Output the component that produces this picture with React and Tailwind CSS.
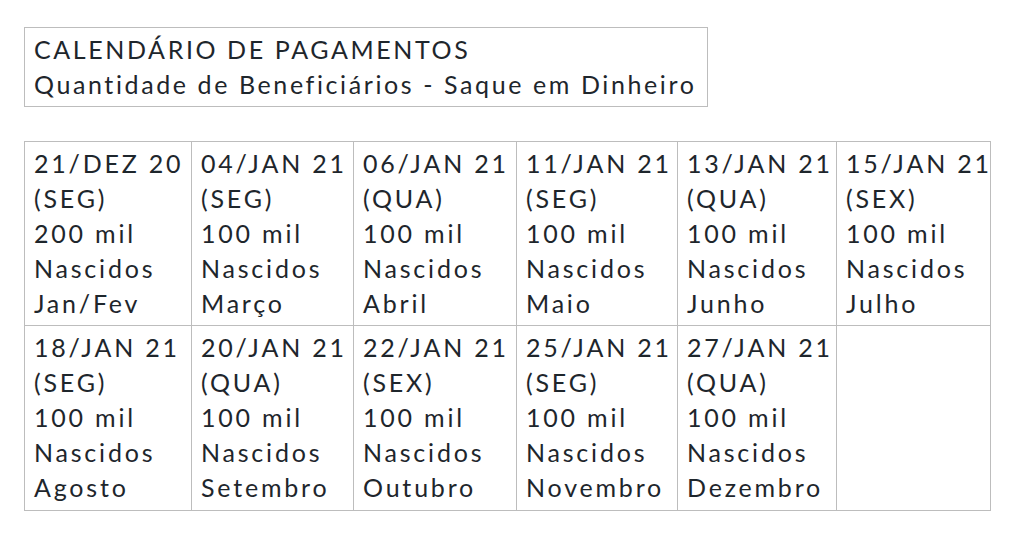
import React from "react";

const rows = [
  [
    ["21/DEZ 20", "(SEG)", "200 mil", "Nascidos", "Jan/Fev"],
    ["04/JAN 21", "(SEG)", "100 mil", "Nascidos", "Março"],
    ["06/JAN 21", "(QUA)", "100 mil", "Nascidos", "Abril"],
    ["11/JAN 21", "(SEG)", "100 mil", "Nascidos", "Maio"],
    ["13/JAN 21", "(QUA)", "100 mil", "Nascidos", "Junho"],
    ["15/JAN 21", "(SEX)", "100 mil", "Nascidos", "Julho"],
  ],
  [
    ["18/JAN 21", "(SEG)", "100 mil", "Nascidos", "Agosto"],
    ["20/JAN 21", "(QUA)", "100 mil", "Nascidos", "Setembro"],
    ["22/JAN 21", "(SEX)", "100 mil", "Nascidos", "Outubro"],
    ["25/JAN 21", "(SEG)", "100 mil", "Nascidos", "Novembro"],
    ["27/JAN 21", "(QUA)", "100 mil", "Nascidos", "Dezembro"],
    null,
  ],
];

const widths = ["w-[167px]", "w-[162px]", "w-[163px]", "w-[161px]", "w-[159px]", "w-[154px]"];

export default function App() {
  return (
    <div
      className="w-[1024px] h-[533px] bg-white text-[#1e262c] overflow-hidden"
      style={{ fontFamily: "Lato, 'Open Sans', sans-serif" }}
    >
      <div className="pt-[27px] pl-[24px]">
        <div className="w-[684px] h-[80px] border border-[#bdbdbd] pl-[9px] pt-[4px] text-[25px] leading-[35px] tracking-[2.6px] whitespace-nowrap">
          <div>CALENDÁRIO DE PAGAMENTOS</div>
          <div>Quantidade de Beneficiários - Saque em Dinheiro</div>
        </div>
        <table className="mt-[34px] w-[966px] border-collapse table-fixed">
          <tbody>
            {rows.map((row, ri) => (
              <tr key={ri}>
                {row.map((cell, ci) => (
                  <td
                    key={ci}
                    className={`${widths[ci]} border border-[#bdbdbd] align-top pl-[9px] pr-0 py-[4px] text-[25px] leading-[35px] tracking-[2.8px] whitespace-nowrap overflow-visible ${ri === 0 ? "h-[183px]" : "h-[185px]"}`}
                  >
                    {cell && cell.map((l, li) => <div key={li}>{l}</div>)}
                  </td>
                ))}
              </tr>
            ))}
          </tbody>
        </table>
      </div>
    </div>
  );
}
